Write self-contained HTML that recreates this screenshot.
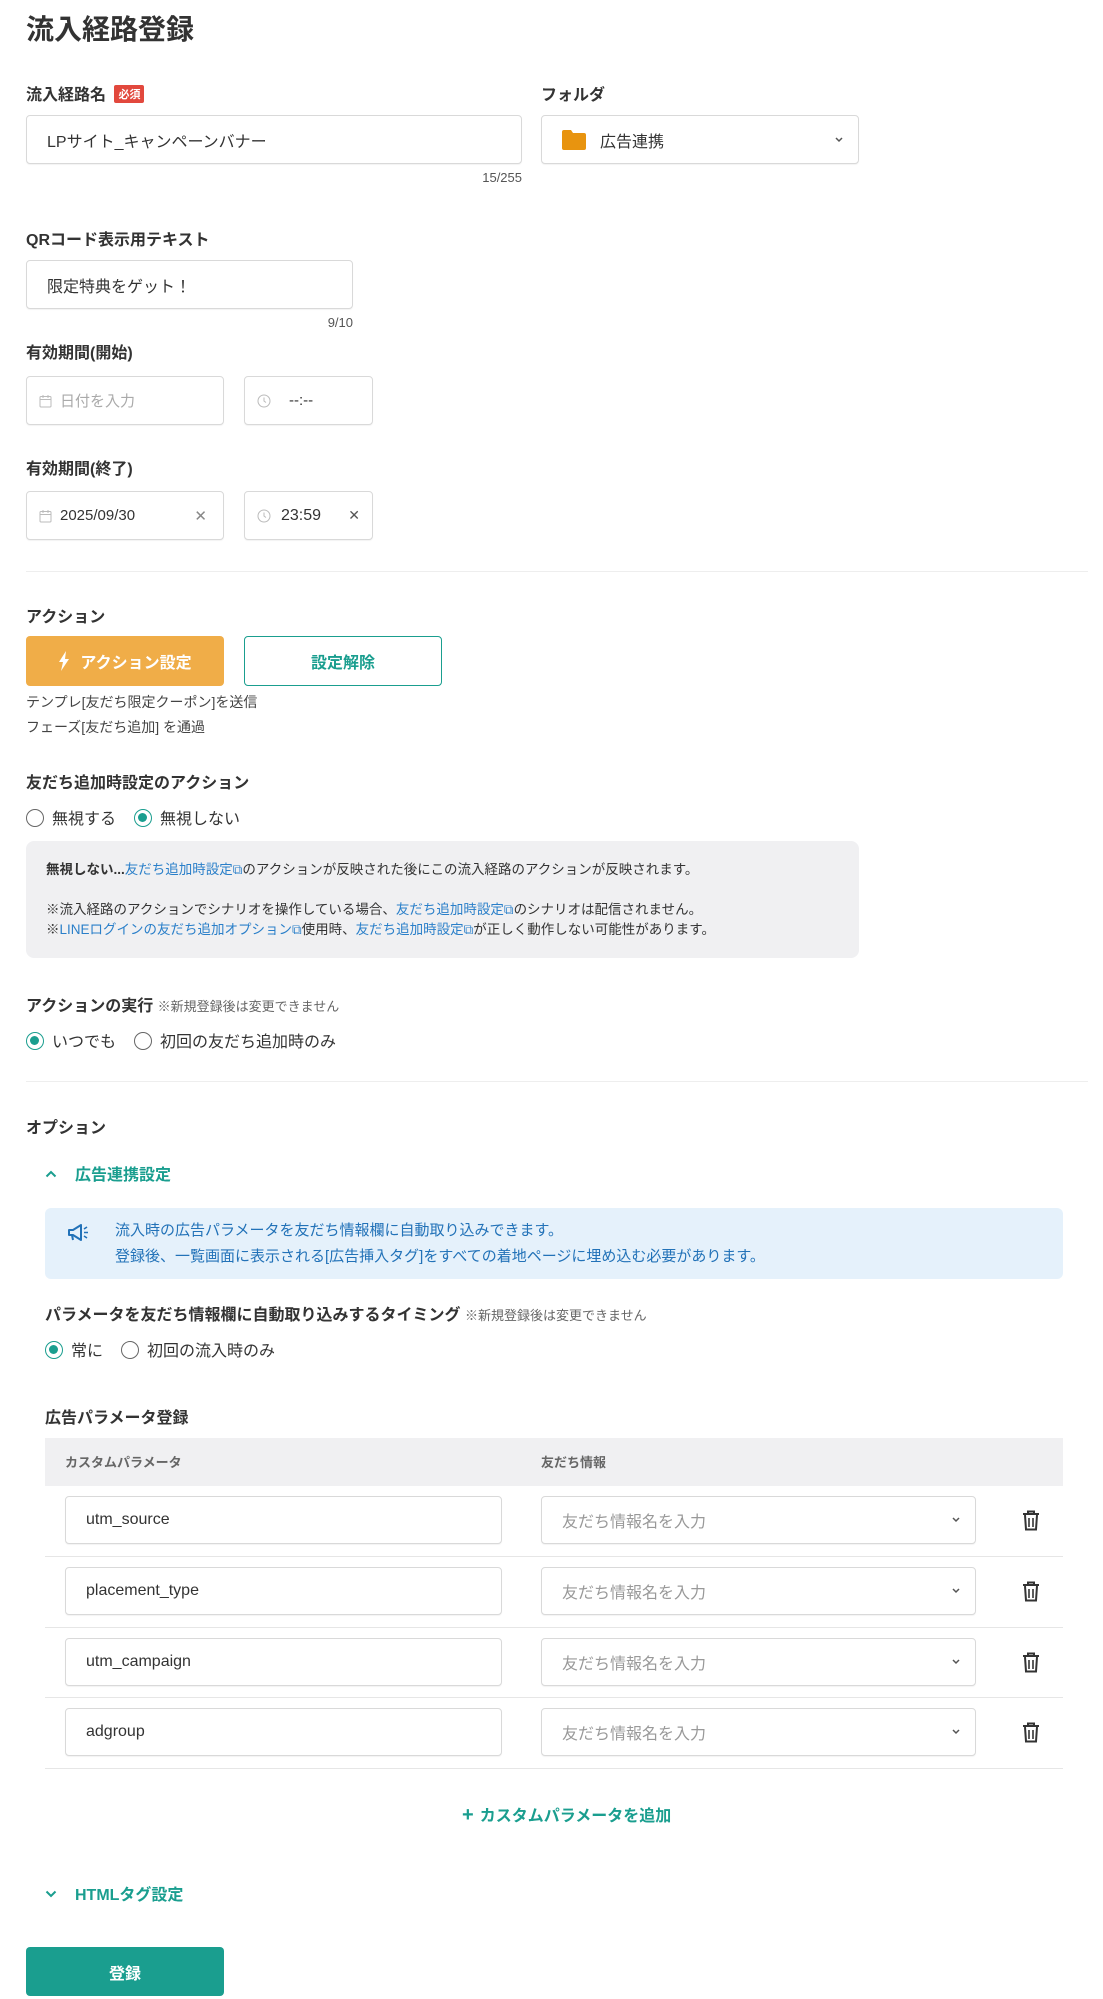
<!DOCTYPE html>
<html><head><meta charset="utf-8"><style>
*{box-sizing:border-box;margin:0;padding:0}
body{width:1103px;height:1999px;background:#fff;font-family:"Liberation Sans","Noto Sans CJK JP",sans-serif;color:#333;position:relative;overflow:hidden}
.a{position:absolute;white-space:nowrap}
.lbl{font-size:16px;font-weight:bold;color:#333}
.box{position:absolute;border:1px solid #d9d9d9;border-radius:4px;background:#fff;box-shadow:0 1px 1px rgba(0,0,0,.05)}
.inp{font-size:16px;color:#333;display:flex;align-items:center;padding-left:20px}
.sm{font-size:13px;color:#555}
.hr{position:absolute;left:26px;width:1062px;height:1px;background:#eee}
.radio{display:inline-block;width:18px;height:18px;border:1.5px solid #666;border-radius:50%;vertical-align:-3px;margin-right:8px;position:relative}
.radio.on{border-color:#1a9e8f}
.radio.on:after{content:"";position:absolute;left:3px;top:3px;width:9px;height:9px;border-radius:50%;background:#1a9e8f}
.rl{font-size:16px;color:#333;margin-right:18px}
.lk{color:#2a7fc9}
.teal{color:#1a9e8f}
.chev{position:absolute;right:14px;top:50%;margin-top:-4px}
.ic{margin-right:8px;flex:none}
</style></head><body>
<div class="a" style="left:26px;top:8px;font-size:28px;font-weight:bold;color:#333">流入経路登録</div>

<div class="a lbl" style="left:26px;top:81px">流入経路名 <span style="display:inline-block;background:#e2483d;color:#fff;font-size:11px;padding:1px 4px;border-radius:2px;vertical-align:2px;margin-left:4px">必須</span></div>
<div class="a lbl" style="left:541px;top:81px">フォルダ</div>
<div class="box inp" style="left:26px;top:115px;width:496px;height:49px">LPサイト_キャンペーンバナー</div>
<div class="box inp" style="left:541px;top:115px;width:318px;height:49px"><svg width="24" height="20" viewBox="0 0 24 20" style="margin-right:14px"><path d="M0 2a2 2 0 0 1 2-2h7l2 3h11a2 2 0 0 1 2 2v13a2 2 0 0 1-2 2H2a2 2 0 0 1-2-2z" fill="#e8940f"/></svg>広告連携<svg class="chev" width="10" height="7" viewBox="0 0 10 7"><path d="M2 2l3 3 3-3" fill="none" stroke="#555" stroke-width="1.5"/></svg></div>
<div class="a sm" style="right:581px;top:170px">15/255</div>

<div class="a lbl" style="left:26px;top:226px">QRコード表示用テキスト</div>
<div class="box inp" style="left:26px;top:260px;width:327px;height:49px">限定特典をゲット！</div>
<div class="a sm" style="right:750px;top:315px">9/10</div>

<div class="a lbl" style="left:26px;top:339px">有効期間(開始)</div>
<div class="box inp" style="left:26px;top:376px;width:198px;height:49px;padding-left:12px;color:#aaa;font-size:15px"><svg class="ic" width="13" height="14" viewBox="0 0 13 14"><rect x="1" y="2.5" width="11" height="10.5" rx="1" fill="none" stroke="#bbb"/><path d="M1 5.5h11M4 1v3M9 1v3" stroke="#bbb"/></svg>日付を入力</div>
<div class="box inp" style="left:244px;top:376px;width:129px;height:49px;padding-left:12px;font-size:15px"><svg width="14" height="14" viewBox="0 0 14 14" style="margin-right:18px"><circle cx="7" cy="7" r="6" fill="none" stroke="#bbb"/><path d="M7 3.5V7l2 1.5" fill="none" stroke="#bbb"/></svg>--:--</div>

<div class="a lbl" style="left:26px;top:455px">有効期間(終了)</div>
<div class="box inp" style="left:26px;top:491px;width:198px;height:49px;padding-left:12px;font-size:15px"><svg class="ic" width="13" height="14" viewBox="0 0 13 14"><rect x="1" y="2.5" width="11" height="10.5" rx="1" fill="none" stroke="#bbb"/><path d="M1 5.5h11M4 1v3M9 1v3" stroke="#bbb"/></svg>2025/09/30<span style="position:absolute;right:16px;color:#888">✕</span></div>
<div class="box inp" style="left:244px;top:491px;width:129px;height:49px;padding-left:12px;font-size:16px"><svg width="14" height="14" viewBox="0 0 14 14" style="margin-right:10px"><circle cx="7" cy="7" r="6" fill="none" stroke="#bbb"/><path d="M7 3.5V7l2 1.5" fill="none" stroke="#bbb"/></svg>23:59<span style="position:absolute;right:12px;color:#555;font-size:14px">✕</span></div>

<div class="hr" style="top:571px"></div>

<div class="a lbl" style="left:26px;top:603px">アクション</div>
<div class="a" style="left:26px;top:636px;width:198px;height:50px;background:#f0ad48;border-radius:4px;color:#fff;font-weight:bold;font-size:16px;display:flex;align-items:center;justify-content:center"><svg width="12" height="20" viewBox="0 0 12 20" style="margin-right:10px"><path d="M8 0L1 11h4l-2 9 8-12H7z" fill="#fff"/></svg>アクション設定</div>
<div class="a" style="left:244px;top:636px;width:198px;height:50px;border:1px solid #1a9e8f;border-radius:4px;color:#1a9e8f;font-weight:bold;font-size:16px;display:flex;align-items:center;justify-content:center">設定解除</div>
<div class="a" style="left:26px;top:692px;font-size:14px;color:#444">テンプレ[友だち限定クーポン]を送信</div>
<div class="a" style="left:26px;top:717px;font-size:14px;color:#444">フェーズ[友だち追加] を通過</div>

<div class="a lbl" style="left:26px;top:769px">友だち追加時設定のアクション</div>
<div class="a" style="left:26px;top:805px"><span class="radio"></span><span class="rl">無視する</span><span class="radio on"></span><span class="rl">無視しない</span></div>

<div class="a" style="left:26px;top:841px;width:833px;height:117px;background:#f0f0f2;border-radius:8px;font-size:13.5px;color:#333;padding:19px 20px;line-height:20px">
<div><b>無視しない...</b><span class="lk">友だち追加時設定⧉</span>のアクションが反映された後にこの流入経路のアクションが反映されます。</div>
<div style="margin-top:20px">※流入経路のアクションでシナリオを操作している場合、<span class="lk">友だち追加時設定⧉</span>のシナリオは配信されません。</div>
<div>※<span class="lk">LINEログインの友だち追加オプション⧉</span>使用時、<span class="lk">友だち追加時設定⧉</span>が正しく動作しない可能性があります。</div>
</div>

<div class="a lbl" style="left:26px;top:992px">アクションの実行 <span style="font-weight:normal;font-size:13px;color:#666">※新規登録後は変更できません</span></div>
<div class="a" style="left:26px;top:1028px"><span class="radio on"></span><span class="rl">いつでも</span><span class="radio"></span><span class="rl">初回の友だち追加時のみ</span></div>

<div class="hr" style="top:1081px"></div>

<div class="a lbl" style="left:26px;top:1114px">オプション</div>
<div class="a teal" style="left:45px;top:1161px;font-size:16px;font-weight:bold"><svg width="12" height="8" viewBox="0 0 12 8" style="margin-right:18px;vertical-align:2px"><path d="M1.5 6.5L6 2l4.5 4.5" fill="none" stroke="#1a9e8f" stroke-width="2"/></svg>広告連携設定</div>

<div class="a" style="left:45px;top:1208px;width:1018px;height:71px;background:#e5f1fb;border-radius:6px;color:#2272b8;font-size:15px;line-height:26px;padding:10px 0 0 70px">
<svg style="position:absolute;left:22px;top:16px" width="22" height="18" viewBox="0 0 22 18"><path d="M2 6h4l8-5v15l-8-5H2z" fill="none" stroke="#2272b8" stroke-width="2" stroke-linejoin="round"/><path d="M5 11l1 5" stroke="#2272b8" stroke-width="2"/><path d="M17 5l3-2M17 8.5h4M17 12l3 2" stroke="#2272b8" stroke-width="1.6"/></svg>
<div>流入時の広告パラメータを友だち情報欄に自動取り込みできます。</div>
<div>登録後、一覧画面に表示される[広告挿入タグ]をすべての着地ページに埋め込む必要があります。</div>
</div>

<div class="a lbl" style="left:45px;top:1301px">パラメータを友だち情報欄に自動取り込みするタイミング <span style="font-weight:normal;font-size:13px;color:#666">※新規登録後は変更できません</span></div>
<div class="a" style="left:45px;top:1337px"><span class="radio on"></span><span class="rl">常に</span><span class="radio"></span><span class="rl">初回の流入時のみ</span></div>

<div class="a lbl" style="left:45px;top:1404px">広告パラメータ登録</div>
<div class="a" style="left:45px;top:1438px;width:1018px;height:48px;background:#f0f0f2"></div>
<div class="a" style="left:65px;top:1452px;font-size:13px;font-weight:bold;color:#666">カスタムパラメータ</div>
<div class="a" style="left:541px;top:1452px;font-size:13px;font-weight:bold;color:#666">友だち情報</div>

<div class="box inp" style="left:65px;top:1496px;width:437px;height:48px">utm_source</div>
<div class="box inp" style="left:541px;top:1496px;width:435px;height:48px;color:#999">友だち情報名を入力<svg class="chev" width="10" height="7" viewBox="0 0 10 7"><path d="M2 2l3 3 3-3" fill="none" stroke="#555" stroke-width="1.5"/></svg></div>
<svg class="a" style="left:1022px;top:1510px" width="18" height="21" viewBox="0 0 18 21"><path d="M1 4h16M6 4V1.5h6V4" fill="none" stroke="#333" stroke-width="2"/><path d="M3 5l1 14.5h10L15 5" fill="none" stroke="#333" stroke-width="2"/><path d="M7 8v9M11 8v9" stroke="#333" stroke-width="1.6"/></svg>
<div class="a" style="left:45px;top:1556px;width:1018px;height:1px;background:#e6e6e6"></div>

<div class="box inp" style="left:65px;top:1567px;width:437px;height:48px">placement_type</div>
<div class="box inp" style="left:541px;top:1567px;width:435px;height:48px;color:#999">友だち情報名を入力<svg class="chev" width="10" height="7" viewBox="0 0 10 7"><path d="M2 2l3 3 3-3" fill="none" stroke="#555" stroke-width="1.5"/></svg></div>
<svg class="a" style="left:1022px;top:1581px" width="18" height="21" viewBox="0 0 18 21"><path d="M1 4h16M6 4V1.5h6V4" fill="none" stroke="#333" stroke-width="2"/><path d="M3 5l1 14.5h10L15 5" fill="none" stroke="#333" stroke-width="2"/><path d="M7 8v9M11 8v9" stroke="#333" stroke-width="1.6"/></svg>
<div class="a" style="left:45px;top:1627px;width:1018px;height:1px;background:#e6e6e6"></div>

<div class="box inp" style="left:65px;top:1638px;width:437px;height:48px">utm_campaign</div>
<div class="box inp" style="left:541px;top:1638px;width:435px;height:48px;color:#999">友だち情報名を入力<svg class="chev" width="10" height="7" viewBox="0 0 10 7"><path d="M2 2l3 3 3-3" fill="none" stroke="#555" stroke-width="1.5"/></svg></div>
<svg class="a" style="left:1022px;top:1652px" width="18" height="21" viewBox="0 0 18 21"><path d="M1 4h16M6 4V1.5h6V4" fill="none" stroke="#333" stroke-width="2"/><path d="M3 5l1 14.5h10L15 5" fill="none" stroke="#333" stroke-width="2"/><path d="M7 8v9M11 8v9" stroke="#333" stroke-width="1.6"/></svg>
<div class="a" style="left:45px;top:1697px;width:1018px;height:1px;background:#e6e6e6"></div>

<div class="box inp" style="left:65px;top:1708px;width:437px;height:48px">adgroup</div>
<div class="box inp" style="left:541px;top:1708px;width:435px;height:48px;color:#999">友だち情報名を入力<svg class="chev" width="10" height="7" viewBox="0 0 10 7"><path d="M2 2l3 3 3-3" fill="none" stroke="#555" stroke-width="1.5"/></svg></div>
<svg class="a" style="left:1022px;top:1722px" width="18" height="21" viewBox="0 0 18 21"><path d="M1 4h16M6 4V1.5h6V4" fill="none" stroke="#333" stroke-width="2"/><path d="M3 5l1 14.5h10L15 5" fill="none" stroke="#333" stroke-width="2"/><path d="M7 8v9M11 8v9" stroke="#333" stroke-width="1.6"/></svg>
<div class="a" style="left:45px;top:1768px;width:1018px;height:1px;background:#e6e6e6"></div>

<div class="a teal" style="left:462px;top:1802px;font-size:16px;font-weight:bold"><span style="font-size:20px;margin-right:6px">+</span>カスタムパラメータを追加</div>

<div class="a teal" style="left:45px;top:1881px;font-size:16px;font-weight:bold"><svg width="12" height="8" viewBox="0 0 12 8" style="margin-right:18px;vertical-align:2px"><path d="M1.5 1.5L6 6l4.5-4.5" fill="none" stroke="#1a9e8f" stroke-width="2"/></svg>HTMLタグ設定</div>

<div class="a" style="left:26px;top:1947px;width:198px;height:49px;background:#1a9e8f;border-radius:4px;color:#fff;font-weight:bold;font-size:16px;display:flex;align-items:center;justify-content:center">登録</div>
</body></html>
